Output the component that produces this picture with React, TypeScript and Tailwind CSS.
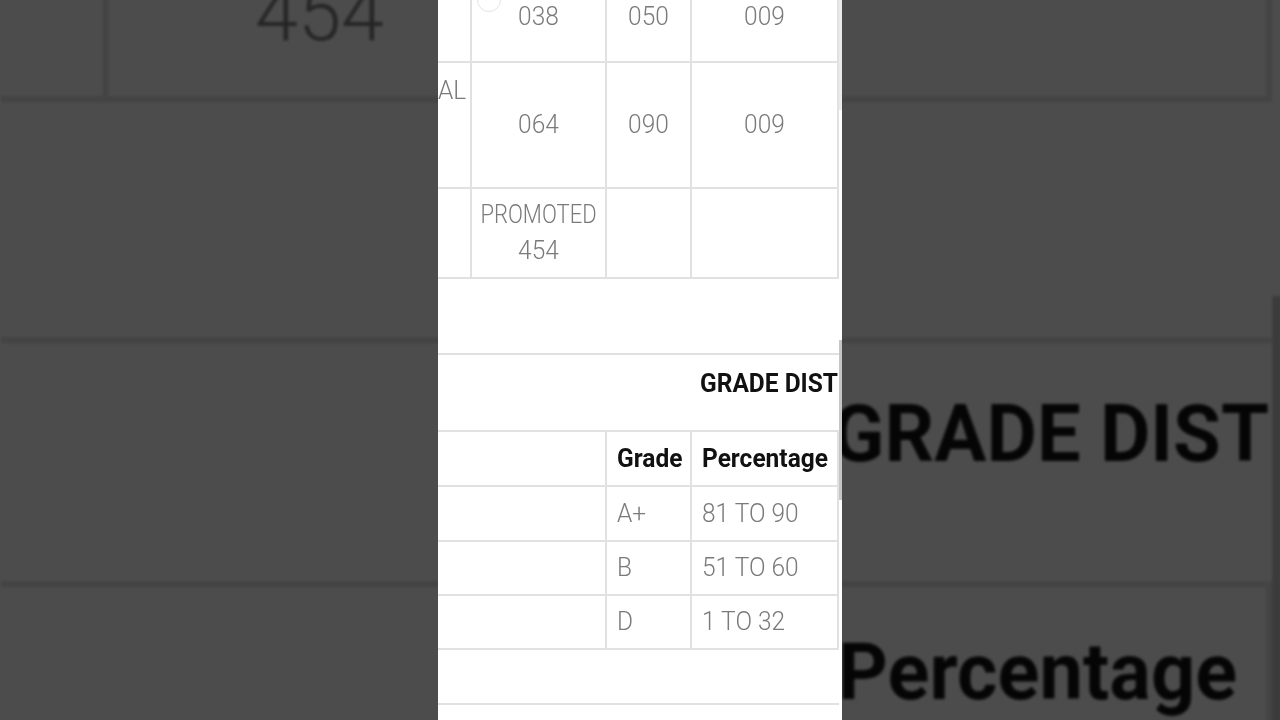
import React from "react";

function T({ children, bold = false, small = false }: { children: React.ReactNode; bold?: boolean; small?: boolean }) {
  return (
    <span
      className={
        "inline-block origin-center whitespace-nowrap leading-[36px] " +
        (small ? "scale-y-[1.14] text-[22px] " : "scale-y-[1.03] text-[24.5px] ") +
        (bold ? "font-bold text-[#111111]" : "font-light text-[#7a7a7a]")
      }
    >
      {children}
    </span>
  );
}

function Phone() {
  return (
    <div className="relative h-[720px] w-[404px] overflow-hidden bg-white font-['Roboto',sans-serif]">
      <div className="mt-[-27px] w-[401px]">
        {/* Row A */}
        <div className="flex h-[90px] border-b-2 border-[#e1e1e1]">
          <div className="w-[34px] border-r-2 border-[#e1e1e1]" />
          <div className="relative flex w-[135px] items-center justify-center border-r-2 border-[#e1e1e1]">
            <span className="absolute left-[5px] top-[15px] h-[24px] w-[24px] rounded-full border-[1.5px] border-[#e4e4e4]" />
            <T>038</T>
          </div>
          <div className="flex w-[85px] items-center justify-center border-r-2 border-[#e1e1e1]">
            <T>050</T>
          </div>
          <div className="flex w-[147px] items-center justify-center border-r-2 border-[#e1e1e1]">
            <T>009</T>
          </div>
        </div>
        {/* Row B */}
        <div className="flex h-[126px] border-b-2 border-[#e1e1e1]">
          <div className="w-[34px] overflow-hidden border-r-2 border-[#e1e1e1] pt-[10px]">
            <T>AL</T>
          </div>
          <div className="flex w-[135px] items-center justify-center border-r-2 border-[#e1e1e1]">
            <T>064</T>
          </div>
          <div className="flex w-[85px] items-center justify-center border-r-2 border-[#e1e1e1]">
            <T>090</T>
          </div>
          <div className="flex w-[147px] items-center justify-center border-r-2 border-[#e1e1e1]">
            <T>009</T>
          </div>
        </div>
        {/* Row C */}
        <div className="flex h-[90px] border-b-2 border-[#e1e1e1]">
          <div className="w-[34px] border-r-2 border-[#e1e1e1]" />
          <div className="flex w-[135px] flex-col items-center justify-center border-r-2 border-[#e1e1e1]">
            <T small>PROMOTED</T>
            <T>454</T>
          </div>
          <div className="w-[85px] border-r-2 border-[#e1e1e1]" />
          <div className="w-[147px] border-r-2 border-[#e1e1e1]" />
        </div>
        {/* spacer */}
        <div className="h-[76px] border-b-2 border-[#e1e1e1]" />
        {/* Title row */}
        <div className="flex h-[77px] items-start overflow-hidden border-b-2 border-[#e1e1e1] pl-[262px] pt-[11px]">
          <T bold>GRADE DISTRIBUTION</T>
        </div>
        {/* Grade table */}
        {[
          { g: "Grade", p: "Percentage", bold: true, h: "h-[55px]" },
          { g: "A+", p: "81 TO 90", bold: false, h: "h-[55px]" },
          { g: "B", p: "51 TO 60", bold: false, h: "h-[54px]" },
          { g: "D", p: "1 TO 32", bold: false, h: "h-[54px]" },
        ].map((r) => (
          <div key={r.g} className={"flex border-b-2 border-[#e1e1e1] " + r.h}>
            <div className="w-[169px] border-r-2 border-[#e1e1e1]" />
            <div className="flex w-[85px] items-center border-r-2 border-[#e1e1e1] pl-[10px]">
              <T bold={r.bold}>{r.g}</T>
            </div>
            <div className="flex w-[147px] items-center border-r-2 border-[#e1e1e1] pl-[10px]">
              <T bold={r.bold}>{r.p}</T>
            </div>
          </div>
        ))}
        <div className="h-[55px] border-b-2 border-[#e1e1e1]" />
      </div>
      {/* scrollbar */}
      <div className="absolute right-0 top-0 h-[110px] w-[3px] bg-[#ebebeb]" />
      <div className="absolute right-0 top-[340px] h-[160px] w-[3px] bg-[#c6c6c6]" />
    </div>
  );
}

export default function App() {
  return (
    <div className="relative h-[720px] w-[1280px] overflow-hidden bg-[#4c4c4c]">
      <div
        aria-hidden="true"
        className="absolute left-[1px] top-[-782px] origin-top-left scale-[3.17] brightness-[0.3] blur-[0.5px]"
      >
        <Phone />
      </div>
      <div className="relative flex h-full justify-center">
        <Phone />
      </div>
    </div>
  );
}
